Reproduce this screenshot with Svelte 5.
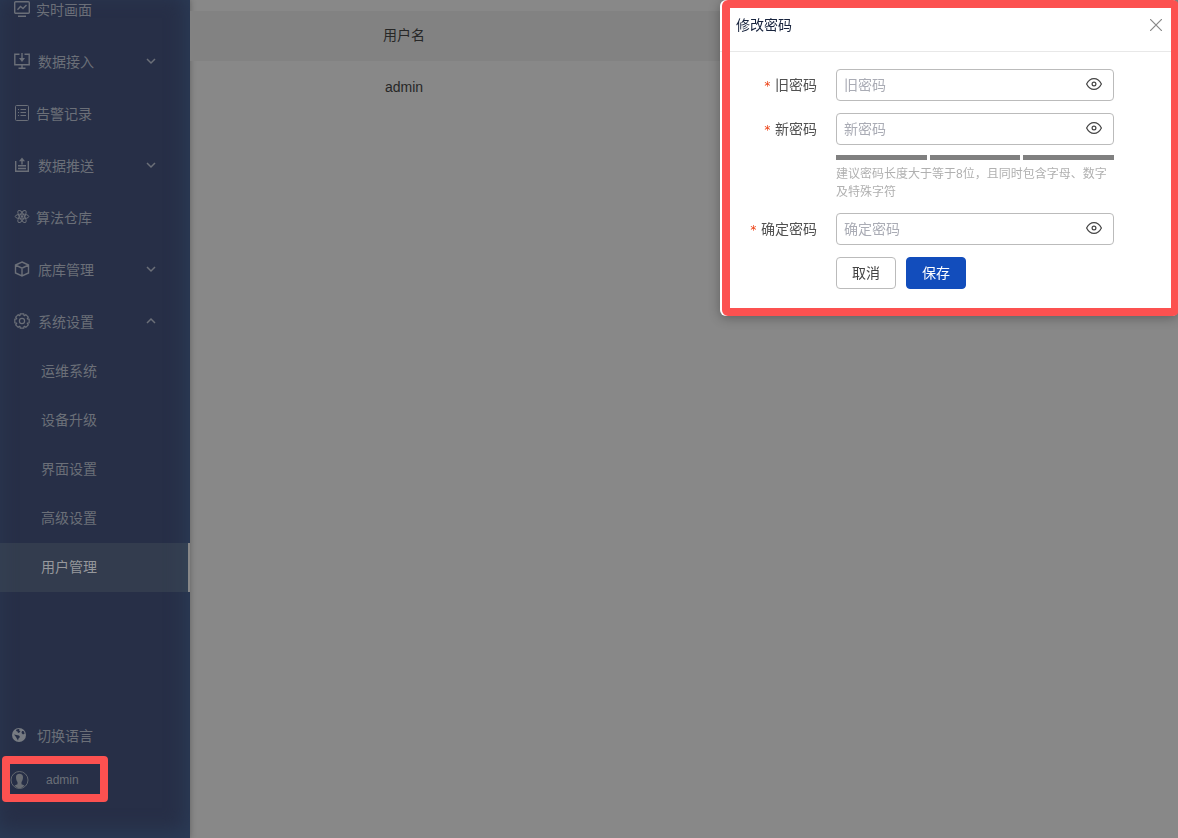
<script>
  const menu = [
    { label: "实时画面", icon: "monitor" },
    { label: "数据接入", icon: "import", arrow: "down" },
    { label: "告警记录", icon: "list" },
    { label: "数据推送", icon: "export", arrow: "down" },
    { label: "算法仓库", icon: "atom" },
    { label: "底库管理", icon: "cube", arrow: "down" },
    { label: "系统设置", icon: "gear", arrow: "up" },
  ];

  const settings = ["运维系统", "设备升级", "界面设置", "高级设置", "用户管理"];
  let current = "用户管理";

  let fields = [
    { id: "old", label: "旧密码", value: "", shown: false },
    { id: "new", label: "新密码", value: "", shown: false, hint: true },
    { id: "confirm", label: "确定密码", value: "", shown: false },
  ];

  let open = true;

  // outline of a cog with eight teeth, centred on 8,8
  function cog() {
    const points = [];
    for (let i = 0; i < 8; i++) {
      for (const [turn, radius] of [[-14, 7.4], [14, 7.4], [20, 5.8], [25, 5.8]]) {
        const a = ((i * 45 + turn) * Math.PI) / 180;
        points.push(`${(8 + radius * Math.cos(a)).toFixed(2)} ${(8 + radius * Math.sin(a)).toFixed(2)}`);
      }
    }
    return "M" + points.join("L") + "Z";
  }
</script>

<div class="page">
  <aside class="sidebar">
    <nav>
      {#each menu as item}
        <button class="item" class:parent={item.arrow} type="button">
          <svg class="icon" viewBox="0 0 16 16">
            {#if item.icon === "monitor"}
              <rect x="0.7" y="0.7" width="14.6" height="11.6" rx="1" />
              <path d="M3.5 8.8 6.5 5.5 9 7.5 12.5 4M4 15.2h8" />
            {:else if item.icon === "import"}
              <path d="M5.5 1.2H.8v10.6h14.4V1.2h-4.7M8 0v7M8 12v3M4.5 15.2h7" />
              <path class="solid" d="M5 5h6L8 9Z" />
            {:else if item.icon === "list"}
              <rect class="thin" x="1.5" y="0.5" width="13" height="15" rx="1" />
              <path class="thin" d="M6.5 4.5H12M6.5 7.5H12M6.5 10.5H12M4 4.5h1M4 7.5h1M4 10.5h1" />
            {:else if item.icon === "export"}
              <path d="M1.7 4v10.3h12.6V4M4 11.5h8M4 8.7h8M8 7.5V2" />
              <path class="solid" d="M5 4.2h6L8 .5Z" />
            {:else if item.icon === "atom"}
              <g class="thin">
                <ellipse cx="8" cy="7.5" rx="2.4" ry="6.8" transform="rotate(30 8 7.5)" />
                <ellipse cx="8" cy="7.5" rx="2.4" ry="6.8" transform="rotate(90 8 7.5)" />
                <ellipse cx="8" cy="7.5" rx="2.4" ry="6.8" transform="rotate(150 8 7.5)" />
              </g>
              <circle class="solid" cx="8" cy="7.5" r="1.3" />
            {:else if item.icon === "cube"}
              <path d="M8 1 14.5 4v8L8 15 1.5 12V4ZM1.5 4 8 7.2 14.5 4M8 7.2V15" />
            {:else}
              <path class="round" d={cog()} />
              <circle class="round" cx="8" cy="8" r="2.6" />
            {/if}
          </svg>
          <span>{item.label}</span>
          {#if item.arrow}
            <svg class="arrow" viewBox="0 0 10 10">
              <path d={item.arrow === "up" ? "M1 7 5 3l4 4" : "M1 3l4 4 4-4"} />
            </svg>
          {/if}
        </button>
      {/each}
      {#each settings as name}
        <button
          class="sub"
          class:active={name === current}
          type="button"
          on:click={() => (current = name)}>{name}</button>
      {/each}
    </nav>

    <div class="bottom">
      <button class="foot" type="button">
        <svg class="globe" viewBox="0 0 14 14">
          <circle cx="7" cy="7" r="7" fill="#777b82" />
          <path d="M4.5 1.5 7.5.8 7 2.5l1.5.5-1 1.5L6 5 5.500 3.500 4 3Z" fill="#272f47" />
          <path d="M2 6.500 4.500 7 7 7.500 8 9l-1.500 1.500L6 12.500 4.800 10.500 4 9Z" fill="#272f47" />
          <path d="M10 3 11.500 3l1.200 2.500L11 6.500 9.500 5Z" fill="#272f47" />
        </svg>
        <span>切换语言</span>
      </button>
      <button class="foot user" type="button">
        <svg class="avatar" viewBox="0 0 18 18">
          <circle cx="9" cy="9" r="8.5" fill="none" stroke="#62676f" />
          <path
            d="M5.5 6C5.5 1.8 12.5 1.8 12.5 6c0 2.5-.7 4-1.5 5v2.2l3 1.4C11.5 18 6.5 18 4 14.6l3-1.4V11c-.8-1-1.5-2.5-1.5-5Z"
            fill="#686c73" />
        </svg>
        <span>admin</span>
      </button>
    </div>
  </aside>

  <main>
    <table>
      <thead>
        <tr><th>用户名</th><th></th></tr>
      </thead>
      <tbody>
        <tr><td>admin</td><td></td></tr>
      </tbody>
    </table>
  </main>
</div>

{#if open}
  <div class="dialog" role="dialog" aria-labelledby="dialog-title">
    <header>
      <h2 id="dialog-title">修改密码</h2>
      <button class="close" type="button" aria-label="关闭" on:click={() => (open = false)}>
        <svg viewBox="0 0 12 12"><path d="M0 0 12 12M12 0 0 12" /></svg>
      </button>
    </header>
    <form on:submit|preventDefault>
      {#each fields as field}
        <div class="row">
          <label for={field.id}><i>*</i>{field.label}</label>
          <div class="control">
            <div class="box">
              <input
                id={field.id}
                type={field.shown ? "text" : "password"}
                placeholder={field.label}
                bind:value={field.value} />
              <button
                class="eye"
                type="button"
                aria-label="显示密码"
                on:click={() => (field.shown = !field.shown)}>
                <svg viewBox="0 0 16 12">
                  <path d="M.6 6C4.2-1.2 11.8-1.2 15.4 6 11.8 13.2 4.2 13.2.6 6Z" />
                  <circle cx="8" cy="6" r="1.9" />
                </svg>
              </button>
            </div>
            {#if field.hint}
              <div class="strength"><span></span><span></span><span></span></div>
              <p>建议密码长度大于等于8位，且同时包含字母、数字及特殊字符</p>
            {/if}
          </div>
        </div>
      {/each}
      <div class="actions">
        <button type="button" on:click={() => (open = false)}>取消</button>
        <button class="primary" type="submit">保存</button>
      </div>
    </form>
  </div>
{/if}

<style>
  :global(body) {
    background: #888;
    font-family: "Liberation Sans", "Noto Sans CJK SC", sans-serif;
    font-size: 14px;
  }

  :global(*) {
    box-sizing: border-box;
  }

  button {
    font: inherit;
    color: inherit;
    border: none;
    background: none;
    padding: 0;
    cursor: pointer;
  }

  svg {
    display: block;
    flex: none;
    fill: none;
    stroke: currentColor;
  }

  .page {
    display: flex;
    min-height: 100vh;
    overflow: hidden;
  }

  .sidebar {
    display: flex;
    flex-direction: column;
    flex: none;
    width: 190px;
    background: #272f47;
    box-shadow: inset -4px -6px 20px #2b3c57, 0 0 6px rgba(0, 0, 0, 0.3);
    color: #6b6f78;
  }

  /* the menu is scrolled a little past its first entry */
  nav {
    margin-top: -17px;
  }

  .item {
    display: flex;
    align-items: center;
    gap: 6px;
    width: 100%;
    height: 52px;
    padding: 0 34px 0 14px;
  }

  .item.parent {
    gap: 8px;
  }

  .icon {
    width: 16px;
    height: 16px;
    stroke-width: 1.4;
  }

  .thin {
    stroke-width: 1;
  }

  .round {
    stroke-width: 1.2;
    stroke-linejoin: round;
  }

  .solid {
    fill: currentColor;
    stroke: none;
  }

  .arrow {
    width: 10px;
    height: 10px;
    margin-left: auto;
    stroke-width: 1.5;
  }

  .sub {
    display: block;
    width: 100%;
    height: 49px;
    padding: 0 0 4px 41px;
    text-align: left;
  }

  .sub.active {
    background: rgba(80, 92, 96, 0.3);
    border-right: 2px solid #888;
    color: #96989c;
  }

  .bottom {
    margin-top: auto;
    padding-bottom: 36px;
  }

  .foot {
    display: flex;
    align-items: center;
    gap: 11px;
    width: 100%;
    height: 44px;
    padding: 2px 0 0 12px;
  }

  .foot svg {
    stroke: none;
  }

  .foot.user {
    gap: 9px;
    width: 106px;
    height: 46px;
    margin-left: 2px;
    padding: 2px 0 0;
    border: 8px solid #fc5150;
    border-radius: 4px;
    font-size: 12px;
  }

  .foot.user span {
    padding-left: 8px;
  }

  .globe {
    width: 14px;
    height: 14px;
  }

  .avatar {
    width: 19px;
    height: 18px;
  }

  main {
    flex: 1;
    padding-top: 11px;
  }

  table {
    width: 100%;
    border-collapse: collapse;
    table-layout: fixed;
    color: #272727;
  }

  th,
  td {
    height: 50px;
    padding: 0;
    font-weight: normal;
    text-align: center;
  }

  th {
    padding-bottom: 4px;
    background: #828282;
  }

  td {
    padding-top: 2px;
  }

  th:first-child {
    width: 428px;
  }

  .dialog {
    position: fixed;
    top: 0;
    right: 0;
    width: 458px;
    max-width: 100%;
    padding-bottom: 27px;
    border-radius: 6px;
    background: white;
    box-shadow: 0 2px 12px rgba(0, 0, 0, 0.3);
  }

  .dialog::after {
    content: "";
    position: absolute;
    inset: 0 -1px 0 2px;
    border: 8px solid #fc5150;
    border-radius: 6px;
    pointer-events: none;
  }

  header {
    display: flex;
    align-items: center;
    justify-content: space-between;
    height: 52px;
    padding: 0 16px 2px;
    border-bottom: 1px solid #e8e8e8;
  }

  h2 {
    margin: 0;
    padding-bottom: 2px;
    font-size: 14px;
    font-weight: normal;
    color: #17233d;
  }

  .close {
    color: #888;
  }

  .close svg {
    width: 12px;
    height: 12px;
    stroke-width: 1.2;
  }

  form {
    padding: 17px 64px 0 0;
  }

  .row {
    display: flex;
    gap: 19px;
    margin-bottom: 12px;
  }

  label {
    width: 97px;
    line-height: 32px;
    text-align: right;
    color: #515151;
  }

  label i {
    margin-right: 4px;
    font: 12px "DejaVu Sans Mono", monospace;
    color: #ed4014;
  }

  .control {
    flex: 1;
  }

  .box {
    display: flex;
    align-items: center;
    height: 32px;
    padding: 0 11px 0 7px;
    border: 1px solid #bbb;
    border-radius: 4px;
  }

  input {
    flex: 1;
    min-width: 0;
    padding: 0;
    border: none;
    outline: none;
    background: none;
    font: inherit;
    color: #515a6e;
  }

  input::placeholder {
    color: #aaacb5;
  }

  .eye {
    padding-bottom: 2px;
    color: #444;
  }

  .eye svg {
    width: 16px;
    height: 12px;
    stroke-width: 1.2;
  }

  .strength {
    display: flex;
    gap: 3px;
    margin-top: 10px;
  }

  .strength span {
    flex: 1;
    height: 5px;
    background: #808080;
  }

  p {
    margin: 5px 0 0;
    font-size: 12px;
    line-height: 18px;
    color: #b0b0b0;
  }

  .actions {
    display: flex;
    gap: 10px;
    padding-left: 116px;
  }

  .actions button {
    width: 60px;
    height: 32px;
    padding-bottom: 2px;
    border: 1px solid #bbb;
    border-radius: 4px;
    color: #444;
  }

  .actions .primary {
    border-color: #124dbc;
    background: #124dbc;
    color: white;
  }
</style>
